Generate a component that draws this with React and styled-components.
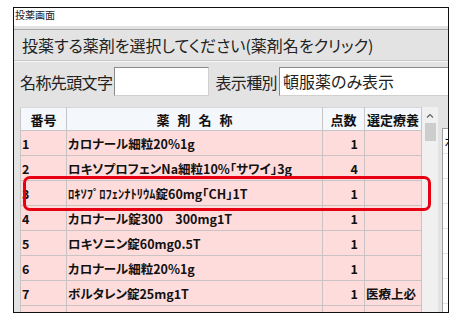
import React from 'react';
import styled, { createGlobalStyle } from 'styled-components';

const Global = createGlobalStyle`
  html, body {
    margin: 0;
    padding: 0;
    background: #ffffff;
  }
  body {
    font-family: "Noto Sans CJK JP", "Noto Sans", sans-serif;
    color: #111;
  }
`;

const Window = styled.div`
  box-sizing: border-box;
  margin: 7px 0 0 13px;
  width: 436px;
  height: 306px;
  border: 1px solid #111;
  overflow: hidden;
  display: flex;
  flex-direction: column;
  background: #ffffff;
`;

const TitleBar = styled.div`
  height: 18px;
  flex-shrink: 0;
  font-size: 10px;
  line-height: 13px;
  padding-left: 1px;
  color: #222;
  background: #fff;
`;

const Body = styled.div`
  flex: 1;
  background: #e3e3e3;
  padding-top: 3px;
  display: flex;
  flex-direction: column;
  min-height: 0;
`;

const PromptBar = styled.div`
  height: 30px;
  flex-shrink: 0;
  border-top: 1px solid #ababab;
  border-bottom: 1px solid #c8c8c8;
  display: flex;
  align-items: center;
  padding-left: 8px;
  font-size: 16px;
  font-feature-settings: "palt";
  color: #222;
  white-space: nowrap;
`;

const FilterRow = styled.div`
  height: 39px;
  flex-shrink: 0;
  display: flex;
  align-items: center;
  padding-left: 6px;
  border-top: 1px solid #f6f6f6;
  white-space: nowrap;
`;

const Label = styled.span`
  font-size: 16px;
  color: #222;
  font-feature-settings: "palt";
  letter-spacing: -0.6px;
  margin-left: ${(p) => p.$gap || 0}px;
  margin-right: 2px;
`;

const Field = styled.div`
  box-sizing: border-box;
  width: ${(p) => p.$width}px;
  flex-shrink: 0;
  height: 29px;
  background: #fff;
  border: 1px solid #8a8a8a;
  border-right-color: #d0d0d0;
  border-bottom-color: #d0d0d0;
  font-size: 16px;
  line-height: 27px;
  padding-left: 3px;
  color: #222;
  font-feature-settings: "palt";
`;

const Content = styled.div`
  flex: 1;
  display: flex;
  align-items: flex-start;
  padding: 6px 0 0 6px;
  min-height: 0;
`;

const TableWrap = styled.div`
  position: relative;
  width: 401px;
  flex-shrink: 0;
`;

const Table = styled.table`
  border-collapse: collapse;
  table-layout: fixed;
  width: 401px;
  border-left: 1px solid #9a9a9a;
`;

const Th = styled.th`
  height: 22px;
  padding: 0;
  background: #f4f7fc;
  border: 1px solid #c6c6c6;
  border-top-color: #d8d8d8;
  font-size: 13px;
  font-weight: 700;
  text-align: center;
  color: #111;
  white-space: nowrap;
  letter-spacing: ${(p) => p.$spread || 0}px;
  text-indent: ${(p) => p.$spread || 0}px;
`;

const Td = styled.td`
  height: 24px;
  padding: 0 ${(p) => (p.$right ? 6 : 2)}px 0 ${(p) => (p.$right ? 0 : 1)}px;
  background: #ffdcdc;
  border: 1px solid #c9c3c3;
  font-size: 12.5px;
  font-weight: 700;
  text-align: ${(p) => (p.$right ? 'right' : 'left')};
  white-space: nowrap;
  overflow: hidden;
  color: #111;
  font-feature-settings: "palt";
`;

const Highlight = styled.div`
  position: absolute;
  left: 3px;
  top: 69px;
  width: 408px;
  height: 35px;
  box-sizing: border-box;
  border: 3.5px solid #e60012;
  border-radius: 7px;
  pointer-events: none;
`;

const ScrollBar = styled.div`
  width: 16px;
  flex-shrink: 0;
  align-self: stretch;
  background: #f0f0f0;
  border-left: 1px solid #e0e0e0;
  display: flex;
  flex-direction: column;
  align-items: center;
`;

const ArrowBtn = styled.div`
  height: 16px;
  width: 100%;
  display: flex;
  align-items: center;
  justify-content: center;
`;

const Thumb = styled.div`
  width: 11px;
  height: 18px;
  background: #cdcdcd;
`;

const SidePanel = styled.div`
  margin: 21px 0 0 4px;
  flex: 1;
  align-self: stretch;
  background: #fff;
  border-left: 1px solid #a0a0a0;
  border-top: 1px solid #a0a0a0;
  display: flex;
  flex-direction: column;
`;

const SideCell = styled.div`
  height: 24px;
  border-bottom: 1px solid #e4e4e4;
  font-size: 14px;
  line-height: 24px;
  padding-left: 1px;
  white-space: nowrap;
  overflow: hidden;
`;

const rows = [
  { no: '1', name: 'カロナール細粒20%1g', pt: '1', sel: '' },
  { no: '2', name: 'ロキソプロフェンNa細粒10%「サワイ」3g', pt: '4', sel: '' },
  { no: '3', name: 'ﾛｷｿﾌﾟﾛﾌｪﾝﾅﾄﾘｳﾑ錠60mg｢CH｣1T', pt: '1', sel: '' },
  { no: '4', name: 'カロナール錠300\u3000300mg1T', pt: '1', sel: '' },
  { no: '5', name: 'ロキソニン錠60mg0.5T', pt: '1', sel: '' },
  { no: '6', name: 'カロナール細粒20%1g', pt: '1', sel: '' },
  { no: '7', name: 'ボルタレン錠25mg1T', pt: '1', sel: '医療上必' },
  { no: '8', name: 'ロキソニン錠60mg1T', pt: '1', sel: '' },
];

const App = () => (
  <>
    <Global />
    <Window>
      <TitleBar>投薬画面</TitleBar>
      <Body>
        <PromptBar>投薬する薬剤を選択してください(薬剤名をクリック)</PromptBar>
        <FilterRow>
          <Label>名称先頭文字</Label>
          <Field $width={95} />
          <Label $gap={6}>表示種別</Label>
          <Field $width={200}>頓服薬のみ表示</Field>
        </FilterRow>
        <Content>
          <TableWrap>
            <Table>
              <colgroup>
                <col style={{ width: 46 }} />
                <col style={{ width: 256 }} />
                <col style={{ width: 42 }} />
                <col style={{ width: 57 }} />
              </colgroup>
              <thead>
                <tr>
                  <Th>番号</Th>
                  <Th $spread={8}>薬剤名称</Th>
                  <Th>点数</Th>
                  <Th>選定療養</Th>
                </tr>
              </thead>
              <tbody>
                {rows.map((r) => (
                  <tr key={r.no}>
                    <Td>{r.no}</Td>
                    <Td>{r.name}</Td>
                    <Td $right>{r.pt}</Td>
                    <Td>{r.sel}</Td>
                  </tr>
                ))}
              </tbody>
            </Table>
            <Highlight />
          </TableWrap>
          <ScrollBar>
            <ArrowBtn>
              <svg width="8" height="5" viewBox="0 0 8 5">
                <path d="M1 4.5 L4 1.5 L7 4.5" fill="none" stroke="#606060" strokeWidth="1.2" />
              </svg>
            </ArrowBtn>
            <Thumb />
          </ScrollBar>
          <SidePanel>
            <SideCell>ホ</SideCell>
            <SideCell />
            <SideCell />
            <SideCell />
            <SideCell />
            <SideCell />
            <SideCell />
          </SidePanel>
        </Content>
      </Body>
    </Window>
  </>
);

export default App;
